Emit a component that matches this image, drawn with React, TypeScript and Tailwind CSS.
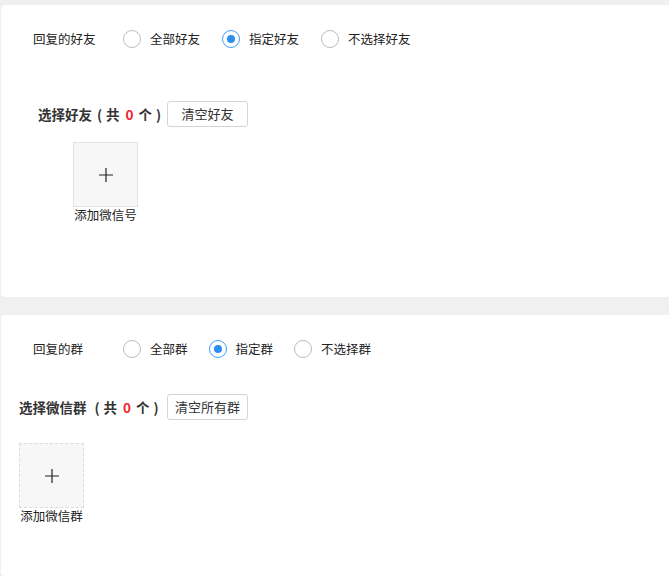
const font = { fontFamily: '"Microsoft YaHei", "Noto Sans CJK SC", sans-serif' };

function Radio({ label, checked }: { label: string; checked?: boolean }) {
  return (
    <label className="flex items-center">
      <span
        className={
          checked
            ? "flex h-[18px] w-[18px] items-center justify-center rounded-full border border-[#409eff] bg-white"
            : "h-[18px] w-[18px] rounded-full border border-[#bdbdbd] bg-white"
        }
      >
        {checked && <span className="h-[8px] w-[8px] rounded-full bg-[#2d8cf0]" />}
      </span>
      <span className="ml-[9px] text-[12.5px] text-[#222]">{label}</span>
    </label>
  );
}

function RadioRow({
  title,
  options,
  gap,
}: {
  title: string;
  options: string[];
  gap: string;
}) {
  return (
    <div className="flex h-5 items-center pl-[32px]">
      <span className="w-[90px] text-[12.5px] text-[#222]">{title}</span>
      <div className={"flex items-center " + gap}>
        {options.map((o, i) => (
          <Radio key={o} label={o} checked={i === 1} />
        ))}
      </div>
    </div>
  );
}

function AddTile({ label, dashed }: { label: string; dashed?: boolean }) {
  return (
    <div className="flex w-[65px] flex-col items-center">
      <div
        className={
          "flex h-[65px] w-[65px] items-center justify-center bg-[#f7f7f7] border " +
          (dashed ? "border-dashed border-[#dcdcdc]" : "border-[#e3e3e3]")
        }
      >
        <svg width="14" height="14" viewBox="0 0 14 14">
          <path d="M7 0v14M0 7h14" stroke="#222" strokeWidth="1.2" />
        </svg>
      </div>
      <span className="mt-[1px] whitespace-nowrap text-[12.5px] leading-[14px] text-[#222]">
        {label}
      </span>
    </div>
  );
}

function Counter({
  title,
  button,
  pad,
  openGap,
}: {
  title: string;
  button: string;
  pad: string;
  openGap: string;
}) {
  return (
    <div className={"flex items-center " + pad}>
      <span className="flex items-center whitespace-nowrap text-[13.5px] font-bold text-[#333]">
        <span>{title}</span>
        <span className={openGap}>(</span>
        <span className="ml-[4px]">共</span>
        <span className="ml-[6px] text-[#f5222d]">0</span>
        <span className="ml-[5px]">个</span>
        <span className="ml-[4px]">)</span>
      </span>
      <button className="ml-auto h-[26px] w-[81px] shrink-0 rounded-[3px] border border-[#d4d4d4] bg-white text-[13px] text-[#333]">
        {button}
      </button>
    </div>
  );
}

export default function App() {
  return (
    <div className="h-[576px] overflow-hidden bg-[#f0f0f0] pl-[1px] pt-[5px]" style={font}>
      {/* 好友 */}
      <div className="h-[292px] rounded-l-[4px] bg-white pt-[24px]">
        <RadioRow title="回复的好友" options={["全部好友", "指定好友", "不选择好友"]} gap="gap-[22px]" />
        <div className="mt-[52px] w-[247px]">
          <Counter title="选择好友" button="清空好友" pad="pl-[37px]" openGap="ml-[5px]" />
        </div>
        <div className="ml-[72px] mt-[15px]">
          <AddTile label="添加微信号" />
        </div>
      </div>

      {/* 群 */}
      <div className="mt-[18px] h-[261px] rounded-l-[4px] bg-white pt-[24px]">
        <RadioRow title="回复的群" options={["全部群", "指定群", "不选择群"]} gap="gap-[21px]" />
        <div className="mt-[35px] w-[247px]">
          <Counter title="选择微信群" button="清空所有群" pad="pl-[18px]" openGap="ml-[8px]" />
        </div>
        <div className="ml-[18px] mt-[23px]">
          <AddTile label="添加微信群" dashed />
        </div>
      </div>
    </div>
  );
}
